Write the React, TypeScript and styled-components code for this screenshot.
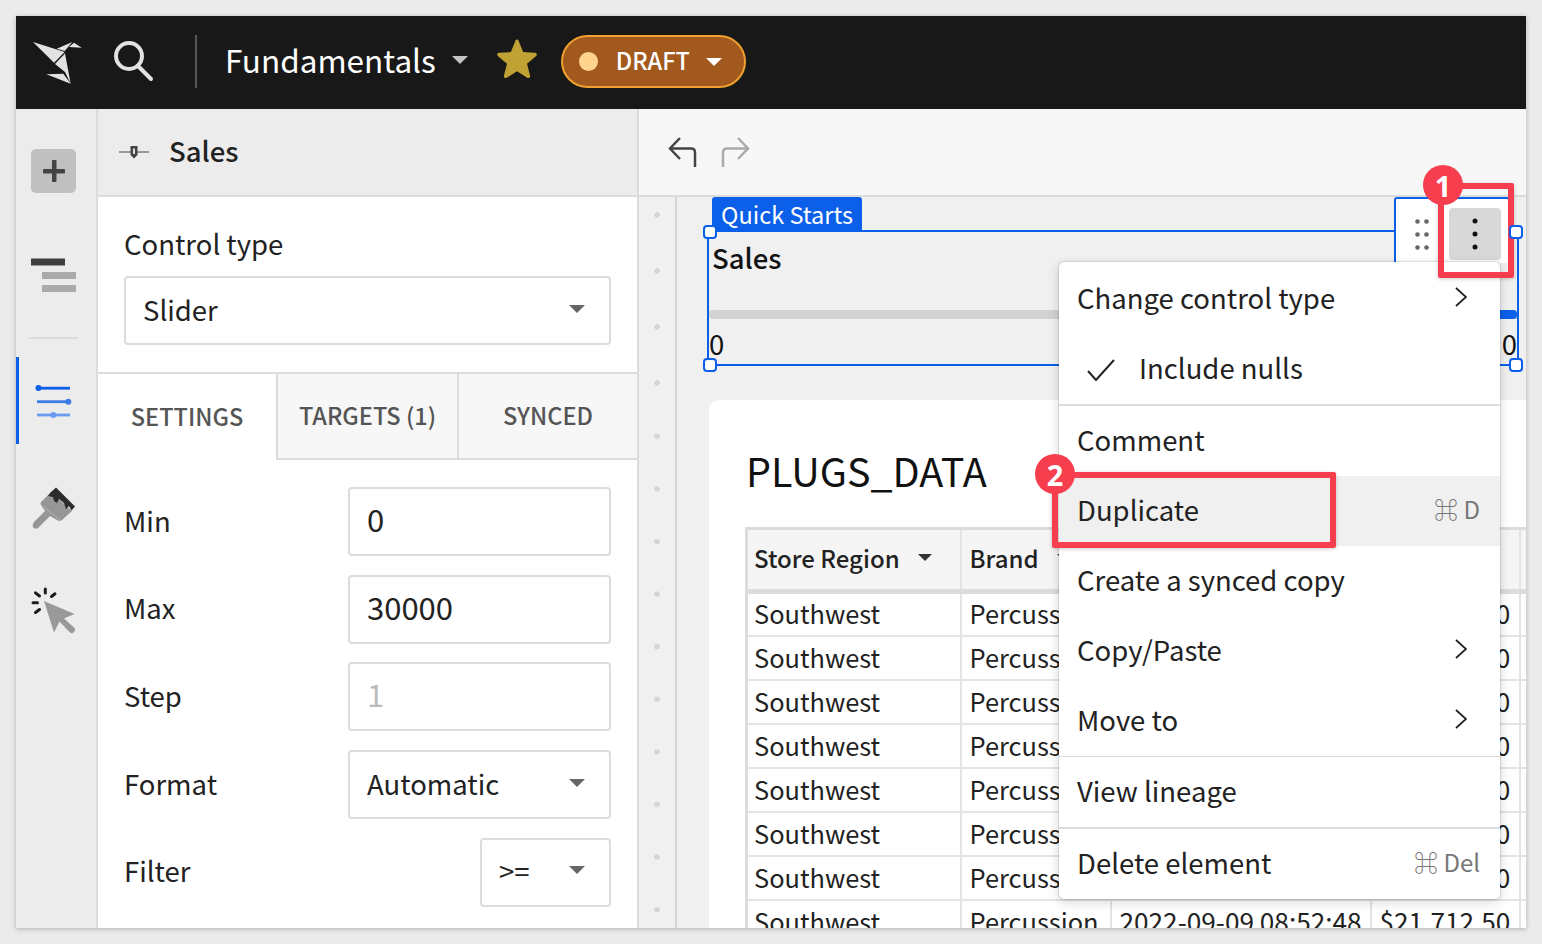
import styled, { createGlobalStyle } from "styled-components";

const FONT = `"Noto Sans CJK SC", "Noto Sans", sans-serif`;
const BLUE = "#0b5fe8";
const RED = "#f73e4f";

const GlobalStyle = createGlobalStyle`
  html, body {
    margin: 0;
    height: 100%;
    background: #ebebeb;
    font-family: ${FONT};
    overflow: hidden;
  }
  * { box-sizing: border-box; }
`;

const rows = Array.from({ length: 8 });

const LogoIcon = () => (
  <svg width="52" height="46" viewBox="32 38 52 46" fill="#e2e2e2">
    <polygon points="33,40 64.7,50 54,60.7" />
    <polygon points="65,51.5 55,62 65,70 70.7,81.7" />
    <polygon points="46.3,72.3 63.3,71.7 70.7,81.7" />
    <polygon points="56.7,46.7 72.3,40 64.7,49" />
    <polygon points="74,40.7 81.7,45.7 69,45" />
  </svg>
);

const SearchIcon = () => (
  <svg width="42" height="42" viewBox="0 0 42 42" fill="none" stroke="#e2e2e2" strokeWidth="4" strokeLinecap="round">
    <circle cx="16" cy="16" r="13" />
    <line x1="25" y1="26" x2="38" y2="39" />
  </svg>
);

const StarIcon = () => (
  <svg width="42" height="42" viewBox="0 0 42 42">
    <path
      d="M21 1.500c.8 0 1.400.6 1.700 1.400l4.400 11.200 11.900.6c1.800.1 2.500 2.200 1.200 3.300l-9.200 7.700 3.100 12c.4 1.700-1.400 3-2.900 2.100L21 33.200l-10.200 6.600c-1.500.9-3.300-.4-2.900-2.100l3.100-12-9.200-7.700c-1.300-1.100-.6-3.200 1.200-3.300l11.900-.6 4.400-11.200c.3-.8.9-1.400 1.700-1.400z"
      fill="#bfa233"
    />
  </svg>
);

const SliderMiniIcon = () => (
  <svg width="30" height="16" viewBox="0 0 30 16">
    <rect x="0" y="7" width="30" height="2" fill="#999" />
    <path d="M11.500 2h7v9l-3.500 3.500-3.500-3.500z" fill="#444" />
    <rect x="14" y="4.500" width="2" height="5.500" fill="#ddd" />
  </svg>
);

const UndoIcon = ({ color }: { color: string }) => (
  <svg width="30" height="32" viewBox="0 0 30 32" fill="none" stroke={color} strokeWidth="2.500">
    <path d="M12 2 2 12.500 12 23" />
    <path d="M2 12.500h21q4 0 4 4V31" />
  </svg>
);

const PlusIcon = () => (
  <svg width="24" height="24" viewBox="0 0 24 24" fill="#444">
    <rect x="1" y="10" width="22" height="4.500" rx="1" />
    <rect x="10" y="1" width="4.500" height="22" rx="1" />
  </svg>
);

const LinesIcon = () => (
  <svg width="46" height="36" viewBox="30 257 46 36">
    <rect x="30" y="258.500" width="34" height="7" fill="#3e3e3e" />
    <rect x="41" y="272" width="34" height="7" fill="#aaa" />
    <rect x="41" y="285" width="34" height="7" fill="#aaa" />
  </svg>
);

const SlidersIcon = () => (
  <svg width="38" height="38" viewBox="34 382 38 38">
    <rect x="37" y="386.800" width="33" height="2.800" fill={BLUE} />
    <circle cx="38.500" cy="388" r="3" fill={BLUE} />
    <rect x="37" y="400.300" width="33" height="2.800" fill="#3a7de9" />
    <circle cx="68.300" cy="401.700" r="3" fill="#3a7de9" />
    <rect x="37" y="413.600" width="33" height="2.800" fill="#6a9cef" />
    <circle cx="53.300" cy="415" r="3" fill="#6a9cef" />
  </svg>
);

const BrushIcon = () => (
  <svg width="46" height="48" viewBox="30 484 46 48">
    <path d="M50 492 71 511 61 520 Q59 522 56 520 L49 516 37 528 Q34 530 32 527 Q31 525 33 522 L44 511 40 505 Q39 503 40 502z" fill="#969696" />
    <path d="M55 487.600 74 506.500 70.500 510.500 68 506 65 509 63 503 58 499 56 503 53 501 52 497 47 496 50 492z" fill="#2c2c2c" />
    <line x1="42" y1="506" x2="60" y2="521" stroke="#bbb" strokeWidth=".8" />
  </svg>
);

const ClickIcon = () => (
  <svg width="48" height="50" viewBox="28 585 48 50">
    <g stroke="#1c1c1c" strokeWidth="3" strokeLinecap="round">
      <line x1="43.300" y1="589" x2="43.300" y2="593" />
      <line x1="49.500" y1="596.500" x2="53" y2="593.800" />
      <line x1="31" y1="602.800" x2="35.500" y2="602.800" />
      <line x1="33.500" y1="612.500" x2="37.500" y2="609.500" />
      <line x1="33.500" y1="592.800" x2="37.500" y2="596" />
    </g>
    <path d="M42 601 72.500 614 62 618.500 72.500 628Q74 630 71.500 632.500 69.500 634 67.500 632L57.500 621.500 52 632.500z" fill="#999" />
  </svg>
);

const DragDots = () => (
  <svg width="14" height="31" viewBox="0 0 14 31" fill="#666">
    {[2.500, 15.500, 28.500].map((y) => (
      <g key={y}>
        <circle cx="2.500" cy={y} r="2.300" />
        <circle cx="11.500" cy={y} r="2.300" />
      </g>
    ))}
  </svg>
);

const MoreDots = () => (
  <svg width="6" height="32" viewBox="0 0 6 32" fill="#111">
    <circle cx="3" cy="3" r="2.500" />
    <circle cx="3" cy="16" r="2.500" />
    <circle cx="3" cy="29" r="2.500" />
  </svg>
);

const Chevron = () => (
  <svg width="12" height="20" viewBox="0 0 12 20" fill="none" stroke="#222" strokeWidth="1.800">
    <path d="M1 1l10 9-10 9" />
  </svg>
);

const Check = () => (
  <svg width="28" height="22" viewBox="0 0 28 22" fill="none" stroke="#222" strokeWidth="2">
    <path d="M1 12l8 9L27 1" />
  </svg>
);

const App = () => {
  return (
    <Page>
      <GlobalStyle />
      <Frame>
        <Header>
          <LogoSlot>
            <LogoIcon />
          </LogoSlot>
          <SearchSlot>
            <SearchIcon />
          </SearchSlot>
          <HeaderDivider />
          <DocTitle>Fundamentals</DocTitle>
          <TitleCaret />
          <StarSlot>
            <StarIcon />
          </StarSlot>
          <DraftPill>
            <DraftDot />
            <span>DRAFT</span>
            <Caret $color="#fff" $size={8} />
          </DraftPill>
        </Header>
        <Body>
          <Rail>
            <RailItem $height={86}>
              <PlusButton>
                <PlusIcon />
              </PlusButton>
            </RailItem>
            <RailItem $height={122}>
              <LinesIcon />
            </RailItem>
            <RailDivider />
            <RailItem $height={87} $active>
              <SlidersIcon />
            </RailItem>
            <RailItem $height={128}>
              <BrushIcon />
            </RailItem>
            <RailItem $height={76}>
              <ClickIcon />
            </RailItem>
          </Rail>

          <Panel>
            <PanelHeader>
              <SliderMiniIcon />
              <PanelTitle>Sales</PanelTitle>
            </PanelHeader>
            <ControlType>
              <FieldLabel>Control type</FieldLabel>
              <FieldBox>
                Slider
                <Caret $color="#666" $size={8} />
              </FieldBox>
            </ControlType>
            <Tabs>
              <Tab $active $width={180}>SETTINGS</Tab>
              <Tab $width={181}>TARGETS (1)</Tab>
              <Tab $width={178}>SYNCED</Tab>
            </Tabs>
            <Form>
              <FormRow>
                <FormLabel>Min</FormLabel>
                <FieldBox $width={263} $number>0</FieldBox>
              </FormRow>
              <FormRow>
                <FormLabel>Max</FormLabel>
                <FieldBox $width={263} $number>30000</FieldBox>
              </FormRow>
              <FormRow>
                <FormLabel>Step</FormLabel>
                <FieldBox $width={263} $number $muted>1</FieldBox>
              </FormRow>
              <FormRow>
                <FormLabel>Format</FormLabel>
                <FieldBox $width={263}>
                  Automatic
                  <Caret $color="#666" $size={8} />
                </FieldBox>
              </FormRow>
              <FormRow>
                <FormLabel>Filter</FormLabel>
                <FieldBox $width={131}>
                  &gt;=
                  <Caret $color="#666" $size={8} />
                </FieldBox>
              </FormRow>
            </Form>
          </Panel>

          <Canvas>
            <CanvasToolbar>
              <UndoIcon color="#444" />
              <Redo>
                <UndoIcon color="#aaa" />
              </Redo>
            </CanvasToolbar>
            <Workspace>
              <DotStrip>
                <DotBand $height={214} $step={56} $offset={-10} />
                <DotBand $height={520} $step={52.6} $offset={-1} />
              </DotStrip>
              <Sheet>
                <ControlBox>
                  <QuickTag>Quick Starts</QuickTag>
                  <Handle $side="left" $edge="top" />
                  <Handle $side="right" $edge="top" />
                  <Handle $side="left" $edge="bottom" />
                  <Handle $side="right" $edge="bottom" />
                  <ElementTools>
                    <DragDots />
                    <MoreButton>
                      <MoreDots />
                    </MoreButton>
                  </ElementTools>
                  <ControlTitle>Sales</ControlTitle>
                  <Track>
                    <TrackEnd />
                  </Track>
                  <RangeLabels>
                    <span>0</span>
                    <span>0</span>
                  </RangeLabels>
                </ControlBox>

                <TableCard>
                  <TableTitle>PLUGS_DATA</TableTitle>
                  <DataTable>
                    <colgroup>
                      <col width="214" />
                      <col width="150" />
                      <col width="260" />
                      <col width="149" />
                      <col width="60" />
                    </colgroup>
                    <thead>
                      <tr>
                        <HeadCell>
                          <HeadInner>
                            Store Region
                            <Caret $color="#333" $size={7} />
                          </HeadInner>
                        </HeadCell>
                        <HeadCell>
                          <HeadInner>
                            Brand
                            <Caret $color="#333" $size={7} />
                          </HeadInner>
                        </HeadCell>
                        <HeadCell>Date</HeadCell>
                        <HeadCell>Sales</HeadCell>
                        <HeadCell />
                      </tr>
                    </thead>
                    <tbody>
                      {rows.map((_, i) => (
                        <tr key={i}>
                          <Cell>Southwest</Cell>
                          <Cell>Percussion</Cell>
                          <Cell $number>2022-09-09 08:52:48</Cell>
                          <Cell $number>$21,712.50</Cell>
                          <Cell />
                        </tr>
                      ))}
                    </tbody>
                  </DataTable>
                </TableCard>
              </Sheet>
            </Workspace>
          </Canvas>

          <Menu>
            <MenuItem>
              Change control type
              <Chevron />
            </MenuItem>
            <MenuItem>
              <CheckSlot>
                <Check />
              </CheckSlot>
              <MenuText>Include nulls</MenuText>
            </MenuItem>
            <MenuDivider />
            <MenuItem>Comment</MenuItem>
            <MenuItem $hover>
              Duplicate
              <Shortcut>⌘ D</Shortcut>
            </MenuItem>
            <MenuItem>Create a synced copy</MenuItem>
            <MenuItem>
              Copy/Paste
              <Chevron />
            </MenuItem>
            <MenuItem>
              Move to
              <Chevron />
            </MenuItem>
            <MenuDivider />
            <MenuItem>View lineage</MenuItem>
            <MenuDivider />
            <MenuItem>
              Delete element
              <Shortcut>⌘ Del</Shortcut>
            </MenuItem>
          </Menu>

          <Callout $left={1422} $top={74} $width={76} $height={95} />
          <Badge $left={1407} $top={56}>1</Badge>
          <Callout $left={1036} $top={363} $width={284} $height={76} />
          <Badge $left={1019} $top={345}>2</Badge>
        </Body>
      </Frame>
    </Page>
  );
};
export default App;

const Page = styled.div`
  height: 944px;
  padding: 16px 16px 16px;
`;
const Frame = styled.div`
  width: 1510px;
  height: 912px;
  display: flex;
  flex-direction: column;
  overflow: hidden;
  box-shadow: 0 1px 5px rgba(0, 0, 0, 0.25);
`;
const Header = styled.header`
  height: 93px;
  flex: none;
  display: flex;
  align-items: center;
  background: #181818;
`;
const LogoSlot = styled.div`
  display: flex;
  margin-left: 16px;
`;
const SearchSlot = styled.div`
  display: flex;
  margin: 0 0 4px 29px;
`;
const HeaderDivider = styled.div`
  width: 2px;
  height: 53px;
  margin: 0 0 2px 40px;
  background: #555;
`;
const DocTitle = styled.div`
  margin-left: 28px;
  padding-bottom: 8px;
  color: #fff;
  font-size: 31.500px;
  line-height: 40px;
`;
const Caret = styled.span<{ $color: string; $size: number }>`
  flex: none;
  width: 0;
  height: 0;
  border-left: ${(p) => p.$size}px solid transparent;
  border-right: ${(p) => p.$size}px solid transparent;
  border-top: ${(p) => p.$size}px solid ${(p) => p.$color};
`;
const TitleCaret = styled.span`
  flex: none;
  width: 0;
  height: 0;
  margin: 0 0 5px 16px;
  border-left: 8px solid transparent;
  border-right: 8px solid transparent;
  border-top: 8px solid #c4c4c4;
`;
const StarSlot = styled.div`
  display: flex;
  margin: 0 0 8px 28px;
`;
const DraftPill = styled.div`
  display: flex;
  align-items: center;
  width: 185px;
  height: 53px;
  margin: 0 0 2px 23px;
  padding-left: 16px;
  border: 2px solid #f0a030;
  border-radius: 27px;
  background: #a2591d;
  color: #fff;
  font-size: 23.500px;
  font-weight: 500;

  span:nth-child(2) {
    margin: 0 16px 3px 18px;
  }
`;
const DraftDot = styled.div`
  width: 19px;
  height: 19px;
  border-radius: 50%;
  background: #ffd58d;
`;
const Body = styled.div`
  position: relative;
  flex: 1;
  min-height: 0;
  display: flex;
`;
const Rail = styled.nav`
  width: 82px;
  flex: none;
  padding-top: 19px;
  background: #ececec;
  border-right: 2px solid #dcdcdc;
  display: flex;
  flex-direction: column;
`;
const RailItem = styled.div<{ $height: number; $active?: boolean }>`
  height: ${(p) => p.$height}px;
  flex: none;
  display: flex;
  align-items: center;
  justify-content: center;
  padding-right: ${(p) => (p.$active ? 10 : 5)}px;
  border-left: ${(p) => (p.$active ? `3px solid ${BLUE}` : "0")};
`;
const RailDivider = styled.div`
  flex: none;
  height: 2px;
  margin: 1px 18px 18px 12px;
  background: #dcdcdc;
`;
const PlusButton = styled.div`
  width: 45px;
  height: 44px;
  display: flex;
  align-items: center;
  justify-content: center;
  border-radius: 5px;
  background: #c0c0c0;
`;
const Panel = styled.aside`
  width: 541px;
  flex: none;
  display: flex;
  flex-direction: column;
  background: #fff;
  border-right: 2px solid #dcdcdc;
`;
const PanelHeader = styled.div`
  height: 88px;
  flex: none;
  display: flex;
  align-items: center;
  gap: 20px;
  padding-left: 21px;
  background: #ececec;
  border-bottom: 2px solid #dcdcdc;
`;
const PanelTitle = styled.div`
  padding-bottom: 4px;
  color: #222;
  font-size: 27.500px;
  font-weight: 500;
  line-height: 36px;
`;
const ControlType = styled.div`
  height: 175px;
  flex: none;
  padding: 26px 26px 0 26px;
`;
const FieldLabel = styled.div`
  font-size: 27.500px;
  line-height: 40px;
  color: #222;
  margin-bottom: 13px;
`;
const FieldBox = styled.div<{ $width?: number; $muted?: boolean; $number?: boolean }>`
  width: ${(p) => (p.$width ? `${p.$width}px` : "100%")};
  height: 69px;
  display: flex;
  align-items: center;
  justify-content: space-between;
  padding: 0 24px ${(p) => (p.$number ? 6 : 4)}px 17px;
  border: 2px solid #dcdcdc;
  border-radius: 4px;
  background: #fff;
  color: ${(p) => (p.$muted ? "#bbb" : "#222")};
  font-size: ${(p) => (p.$number ? 31 : 27.5)}px;
`;
const Tabs = styled.div`
  height: 88px;
  flex: none;
  display: flex;
  border-top: 2px solid #dcdcdc;
`;
const Tab = styled.div<{ $active?: boolean; $width: number }>`
  width: ${(p) => p.$width}px;
  display: flex;
  align-items: center;
  justify-content: center;
  padding-bottom: 2px;
  color: #555;
  font-size: 23.500px;
  font-weight: 500;
  background: ${(p) => (p.$active ? "#fff" : "#f7f7f7")};
  border-bottom: ${(p) => (p.$active ? "0" : "2px solid #dcdcdc")};
  border-right: 2px solid #dcdcdc;

  &:last-child {
    border-right: 0;
  }
`;
const Form = styled.div`
  padding: 27px 26px 0 26px;
  display: flex;
  flex-direction: column;
  gap: 18.700px;
`;
const FormRow = styled.div`
  display: flex;
  align-items: center;
  justify-content: space-between;
`;
const FormLabel = styled.div`
  padding-bottom: 4px;
  font-size: 27.500px;
  color: #222;
`;
const Canvas = styled.main`
  flex: 1;
  min-width: 0;
  display: flex;
  flex-direction: column;
`;
const CanvasToolbar = styled.div`
  height: 88px;
  flex: none;
  display: flex;
  align-items: center;
  gap: 22px;
  padding-left: 29px;
  background: #f7f7f7;
  border-bottom: 2px solid #dcdcdc;
`;
const Redo = styled.div`
  display: flex;
  transform: scaleX(-1);
`;
const Workspace = styled.div`
  flex: 1;
  min-height: 0;
  display: flex;
  background: #f0f0f0;
`;
const DotStrip = styled.div`
  width: 38px;
  flex: none;
  border-right: 2px solid #d6d6d6;
`;
const DotBand = styled.div<{ $height: number; $step: number; $offset: number }>`
  height: ${(p) => p.$height}px;
  background-image: radial-gradient(circle, #d4d4d4 2.500px, transparent 3px);
  background-size: 100% ${(p) => p.$step}px;
  background-position: 0 ${(p) => p.$offset}px;
`;
const Sheet = styled.div`
  flex: 1;
  min-width: 0;
  padding: 33px 0 0 30px;
`;
const ControlBox = styled.section`
  position: relative;
  width: 812px;
  height: 136px;
  border: 2px solid ${BLUE};
  padding: 0 0 0 3px;
`;
const QuickTag = styled.div`
  position: absolute;
  left: 3px;
  top: -35px;
  width: 150px;
  height: 34px;
  padding-left: 9px;
  border-radius: 3px 3px 0 0;
  background: ${BLUE};
  color: #fff;
  font-size: 23.500px;
  line-height: 34px;
`;
const Handle = styled.div<{ $side: "left" | "right"; $edge: "top" | "bottom" }>`
  position: absolute;
  ${(p) => p.$side}: -6px;
  ${(p) => p.$edge}: ${(p) => (p.$edge === "top" ? -7 : -8)}px;
  width: 14px;
  height: 14px;
  border: 2px solid ${BLUE};
  border-radius: 4px;
  background: #fff;
  z-index: 1;
`;
const ElementTools = styled.div`
  position: absolute;
  right: 7px;
  top: -35px;
  width: 116px;
  height: 66px;
  display: flex;
  align-items: flex-start;
  gap: 20px;
  padding: 9px 0 0 19px;
  background: #fff;
  border: 2px solid ${BLUE};
  border-bottom: 0;
  border-radius: 3px 3px 0 0;

  > svg {
    margin-top: 11px;
  }
`;
const MoreButton = styled.div`
  width: 52px;
  height: 52px;
  flex: none;
  display: flex;
  align-items: center;
  justify-content: center;
  border-radius: 4px;
  background: #d8d8d8;
`;
const ControlTitle = styled.div`
  height: 56px;
  padding-top: 6px;
  font-size: 27.500px;
  font-weight: 500;
  line-height: 38px;
  color: #111;
`;
const Track = styled.div`
  position: relative;
  height: 9px;
  margin: 22px 0 0 -3px;
  background: #d2d2d2;
  border-radius: 4px 0 0 4px;
`;
const TrackEnd = styled.div`
  position: absolute;
  right: 0;
  top: 0;
  width: 18px;
  height: 9px;
  background: ${BLUE};
  border-radius: 0 4px 4px 0;
`;
const RangeLabels = styled.div`
  display: flex;
  justify-content: space-between;
  margin: 5px 0 0 -3px;
  font-size: 27.500px;
  line-height: 38px;
  color: #111;
`;
const TableCard = styled.section`
  margin: 34px 0 0 2px;
  padding: 42px 0 0 36px;
  height: 560px;
  background: #fff;
  border-radius: 10px 0 0 0;
  overflow: hidden;
`;
const TableTitle = styled.h2`
  margin: 0 0 29px 1px;
  font-size: 39.500px;
  font-weight: 400;
  line-height: 56px;
  color: #111;
`;
const DataTable = styled.table`
  border-collapse: collapse;
  table-layout: fixed;
  width: 833px;
  border-top: 3px solid #dcdcdc;
  border-left: 3px solid #dcdcdc;
`;
const HeadCell = styled.th`
  height: 63px;
  padding: 0 7px 4px 8px;
  text-align: left;
  background: #f5f5f5;
  border-right: 2px solid #e4e4e4;
  border-bottom: 5px solid #dcdcdc;
  font-size: 24px;
  font-weight: 500;
  color: #222;
  white-space: nowrap;
  overflow: hidden;

  &:first-child {
    padding-left: 6px;
  }
`;
const HeadInner = styled.div`
  display: flex;
  align-items: center;
  gap: 18px;
`;
const Cell = styled.td<{ $number?: boolean }>`
  height: 44px;
  padding: 0 4px 2px 8px;
  border-right: 2px solid #e4e4e4;
  border-bottom: 2px solid #e4e4e4;
  font-size: ${(p) => (p.$number ? 26.2 : 25.4)}px;
  line-height: 34px;
  color: #222;
  white-space: nowrap;
  overflow: hidden;

  &:first-child {
    padding-left: 6px;
  }
`;
const Menu = styled.div`
  position: absolute;
  left: 1043px;
  top: 153px;
  width: 441px;
  padding-top: 2px;
  border-radius: 5px;
  background: #fff;
  box-shadow: 0 0 2px rgba(0, 0, 0, 0.35), 0 3px 12px rgba(0, 0, 0, 0.16);
`;
const MenuItem = styled.div<{ $hover?: boolean }>`
  height: 70px;
  display: flex;
  align-items: center;
  justify-content: space-between;
  padding: 0 33px 4px 18px;
  background: ${(p) => (p.$hover ? "#f0f0f0" : "transparent")};
  color: #222;
  font-size: 27.500px;
`;
const MenuText = styled.span`
  flex: 1;
  margin-left: 24px;
`;
const CheckSlot = styled.span`
  display: flex;
  margin: 5px 0 0 10px;
`;
const MenuDivider = styled.div`
  height: 1.500px;
  background: #dcdcdc;
`;
const Shortcut = styled.span`
  margin-right: -13px;
  color: #777;
  font-size: 24px;
`;
const Callout = styled.div<{ $left: number; $top: number; $width: number; $height: number }>`
  position: absolute;
  left: ${(p) => p.$left}px;
  top: ${(p) => p.$top}px;
  width: ${(p) => p.$width}px;
  height: ${(p) => p.$height}px;
  border: 6px solid ${RED};
  border-radius: 2px;
  box-shadow: 0 1px 4px rgba(0, 0, 0, 0.2);
`;
const Badge = styled.div<{ $left: number; $top: number }>`
  position: absolute;
  left: ${(p) => p.$left}px;
  top: ${(p) => p.$top}px;
  width: 40px;
  height: 40px;
  display: flex;
  align-items: center;
  justify-content: center;
  border-radius: 50%;
  background: ${RED};
  color: #fff;
  font-family: "Noto Sans", sans-serif;
  font-size: 29px;
  font-weight: 700;
`;
